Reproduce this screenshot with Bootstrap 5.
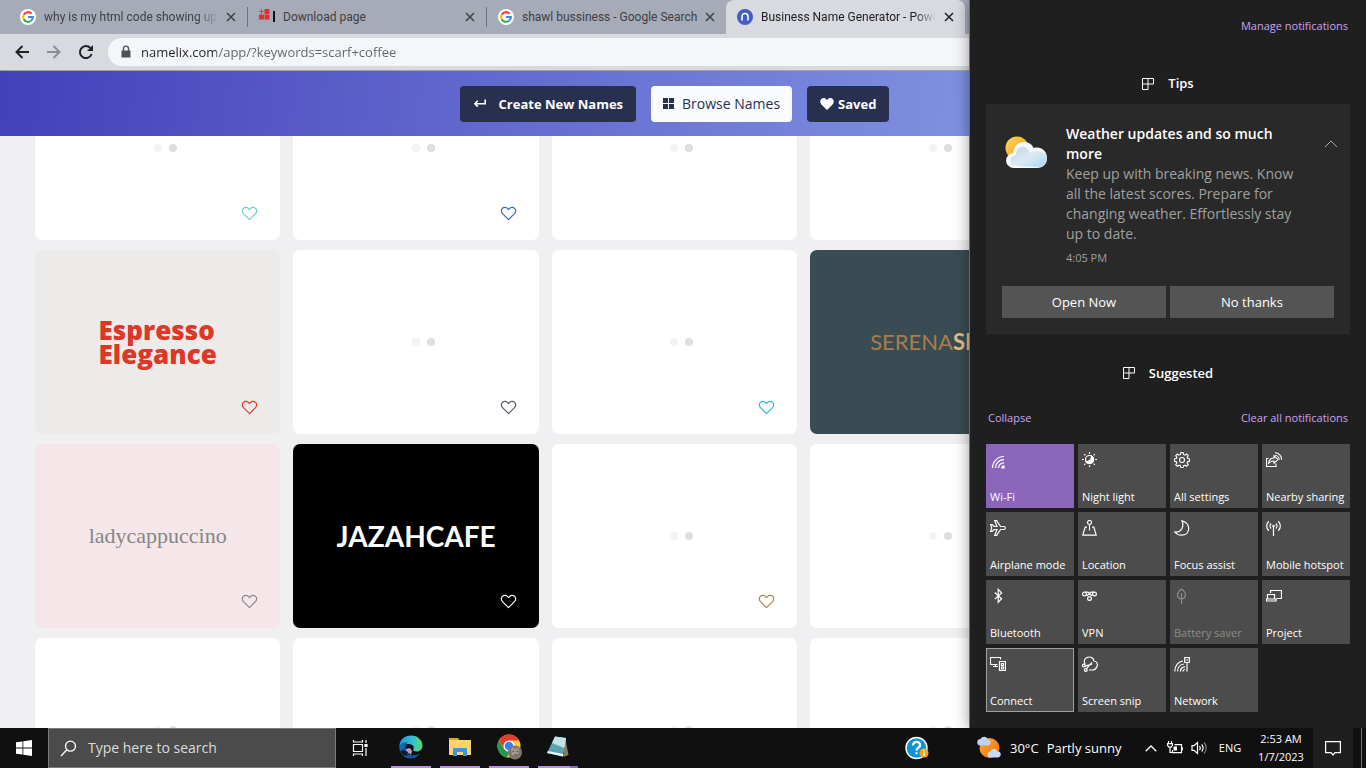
<!DOCTYPE html>
<html lang="en">
<head>
<meta charset="utf-8">
<meta name="viewport" content="width=device-width, initial-scale=1">
<title>Business Name Generator</title>
<link href="https://cdn.jsdelivr.net/npm/bootstrap@5.3.0/dist/css/bootstrap.min.css" rel="stylesheet">
<style>
  body { font-family: "Open Sans", "Noto Sans", sans-serif; font-size: 13px; line-height: 20px; background: #101010; }
  svg { display: block; flex: none; }
  button { border: 0; padding: 0; background: none; color: inherit; }
  .stroke-icon { fill: none; stroke: currentColor; }

  /* browser tabs and toolbar */
  .tab-strip { height: 34px; background: #a7abb7; padding-left: 9px; }
  .browser-tab { width: 239px; padding: 0 11px; color: #3c4043; font-size: 12px; }
  .browser-tab .tab-title { overflow: hidden; white-space: nowrap; font-family: Roboto, "Open Sans", sans-serif; -webkit-mask-image: linear-gradient(90deg, #000 88%, transparent); }
  .tab-title.plain-end { -webkit-mask-image: none !important; }
  .tab-rule { border-right: 1px solid #6f737d; height: 20px; }
  .browser-tab.current { background: #d9dae0; border-radius: 8px 8px 0 0; color: #202124; height: 34px; }
  .tool-strip { height: 36px; background: #d9dae0; padding-left: 6px; color: #202124; }
  .tool-strip > button { width: 32px; display: flex; justify-content: center; }
  .address-pill { height: 28px; border-radius: 14px; background: #f5f6f9; padding-left: 11px; margin-left: 6px; }
  .address-pill input { border: 0; outline: 0; padding: 0; font-size: 13px; color: transparent;
    background: linear-gradient(90deg, #202124 75px, #5f6368 75px); -webkit-background-clip: text; background-clip: text; }

  /* name generator page */
  .site-bar { height: 66px; border-top: 1px solid #9fa0a8; padding-right: 17px; gap: 15px;
    background: linear-gradient(98deg, #4340bb 0, #5f65cc 32%, #6e79d5 50%, #7f92e1 72%, #8fa6ec 100%); }
  .site-btn { height: 36px; border-radius: 4px; padding: 0 13px; font-weight: 700; color: #fff; background: #28304f; }
  .site-btn.light-btn { background: #fafbfe; color: #28304f; font-weight: 500; font-size: 14px; padding: 0 12px; }
  .results { background: #f0f0f3; padding-right: 17px; }
  .name-grid { display: grid; grid-template-columns: repeat(5, 1fr); grid-auto-rows: 184px; gap: 10px 13px; padding: 0 35px; margin-top: -80px; }
  .name-card { position: relative; display: flex; align-items: center; justify-content: center; background: #fff; border-radius: 7px; overflow: hidden; }
  .name-card .like { position: absolute; right: 22px; bottom: 19px; }
  .dots { display: flex; gap: 7px; }
  .dots i { width: 8px; height: 8px; border-radius: 50%; }
  .dots i:nth-child(2) { background: #f3f3f3; }
  .dots i:nth-child(3) { background: #dedede; }
  .logo-espresso { font: 800 26px/24px "Open Sans", sans-serif; color: #dd3727; }
  .logo-lady { font: 22px/28px "Liberation Serif", serif; color: #868686; }
  .logo-jazah { font: 700 28px/32px Lato, sans-serif; color: #fff; }
  .logo-serena { font: 22px/28px Lato, sans-serif; color: #a97c4b; padding-left: 60px; }
  .logo-serena b { color: #e5bd87; font-weight: 700; }

  /* action centre */
  .action-center { position: absolute; top: 0; right: 0; bottom: 0; width: 397px; background: #1f1f1f; color: #fff; border-left: 1px solid #6b6b6b; padding: 15px 16px 16px; box-shadow: 0 0 14px rgba(0,0,0,.4); }
  .action-center a { color: #c9a3f4; text-decoration: none; font-size: 11px; }
  .link-row { padding: 0 2px; }
  .group-title { font-size: 13px; font-weight: 600; gap: 14px; }
  .toast-box { background: #292929; padding: 16px 12px 16px 16px; }
  .toast-text { width: 236px; font-size: 14px; color: #a0a0a0; }
  .toast-text strong { font-weight: 600; color: #fff; display: block; }
  .toast-text time { font-size: 11px; display: block; margin-top: 4px; }
  .toast-actions { margin-top: 18px; }
  .toast-btn { background: #545454; height: 32px; }
  .quick-grid { display: grid; grid-template-columns: repeat(4, 1fr); grid-auto-rows: 64px; gap: 4px; }
  .quick-tile { background: #4c4c4c; color: #fff; font-size: 11px; line-height: 16px; padding: 8px 4px 3px; text-align: left; white-space: nowrap;
    display: flex; flex-direction: column; justify-content: space-between; }
  .quick-tile.on { background: #8a65ba; }
  .quick-tile.focused { box-shadow: inset 0 0 0 1px #a0a0a0; }
  .quick-tile:disabled { color: #8c8c8c; }

  /* taskbar */
  .taskbar { height: 40px; background: #101010; color: #fff; }
  .search-box { width: 288px; background: #4b4b4b; border: 1px solid #7c7c7c; padding-left: 11px; gap: 11px; }
  .search-box input { border: 0; outline: 0; padding: 0; background: none; font-size: 14px; width: 220px; }
  .search-box input::placeholder { color: #dcdcdc; opacity: 1; }
  .task-btn { width: 48px; display: flex; align-items: center; justify-content: center; }
  .app-row { padding-left: 7px; gap: 9px; }
  .app-btn { width: 40px; border-bottom: 2px solid #b98ff0; display: flex; align-items: center; justify-content: center; }
  .app-btn.stacked { border-image: linear-gradient(90deg, #b98ff0 78%, #8a6bb5 78%) 2; }
  .tray-btn { width: 24px; display: flex; align-items: center; justify-content: center; }
  .weather-btn { width: 170px; padding-left: 8px; }
  .lang-btn { width: 38px; font-size: 11px; }
  .clock { width: 64px; font-size: 11px; line-height: 18px; }
  .notify-btn { width: 40px; background: #1f1f1f; display: flex; align-items: center; justify-content: center; }
  .peek { width: 13px; }
  .peek span { border-left: 1px solid #6e6e6e; margin-left: 8px; }
</style>
</head>
<body class="vh-100 overflow-hidden d-flex flex-column">

<svg class="d-none" aria-hidden="true">
  <symbol id="g-logo" viewBox="0 0 16 16">
    <circle cx="8" cy="8" r="8" fill="#fff"/>
    <g fill="none" stroke-width="2.1">
      <path d="M11.6 4.7A4.9 4.9 0 0 0 3.7 5.8" stroke="#ea4335"/>
      <path d="M3.7 5.7a4.9 4.9 0 0 0 0 4.6" stroke="#fbbc05"/>
      <path d="M3.7 10.2a4.9 4.9 0 0 0 7.4 1.5" stroke="#34a853"/>
      <path d="M8 8h4.9a4.8 4.8 0 0 1-1.7 3.6" stroke="#4285f4"/>
    </g>
  </symbol>
  <symbol id="cross" viewBox="0 0 10 10"><path d="M1 1l8 8M9 1L1 9" fill="none" stroke="currentColor" stroke-width="1.5"/></symbol>
  <symbol id="heart" viewBox="0 0 17 15"><path d="M8.500 13.600L2.500 7.600C.9 5.900 1 3.700 2.400 2.400 4 .9 6.400 1.200 7.600 2.700L8.500 3.700 9.400 2.700C10.600 1.200 13 .9 14.600 2.400 16 3.700 16.100 5.900 14.500 7.600Z" fill="none" stroke="currentColor" stroke-width="1.200" stroke-linejoin="round"/></symbol>
  <symbol id="tiles" viewBox="0 0 12 12"><path d="M.5.5h11v5.500h-5.500v5.500h-5.500zM6 .5V6M.5 6H6" fill="none" stroke="currentColor"/></symbol>
</svg>

<div class="position-relative flex-grow-1 overflow-hidden">
  <div class="h-100 d-flex flex-column">

    <nav class="tab-strip d-flex align-items-center flex-shrink-0" aria-label="Tabs">
      <div class="browser-tab tab-rule d-flex align-items-center gap-2">
        <svg width="16" height="16"><use href="#g-logo"/></svg>
        <span class="tab-title flex-grow-1">why is my html code showing up</span>
        <button aria-label="Close tab"><svg width="10" height="10"><use href="#cross"/></svg></button>
      </div>
      <div class="browser-tab tab-rule d-flex align-items-center gap-2">
        <svg width="16" height="16" viewBox="0 0 16 16"><path d="M5.500 0H10.500v5H5.500zM0 5.500h5v5H0zM5.500 5.500h5v5h-5z" fill="#d93236"/><path d="M2.500 0v5M0 2.500h5" stroke="#c54a50"/><path d="M15 2v11" stroke="#111" stroke-width="2"/></svg>
        <span class="tab-title plain-end flex-grow-1">Download page</span>
        <button aria-label="Close tab"><svg width="10" height="10"><use href="#cross"/></svg></button>
      </div>
      <div class="browser-tab d-flex align-items-center gap-2">
        <svg width="16" height="16"><use href="#g-logo"/></svg>
        <span class="tab-title plain-end flex-grow-1">shawl bussiness - Google Search</span>
        <button aria-label="Close tab"><svg width="10" height="10"><use href="#cross"/></svg></button>
      </div>
      <div class="browser-tab current d-flex align-items-center gap-2">
        <svg width="16" height="16" viewBox="0 0 16 16"><circle cx="8" cy="8" r="8" fill="#4460bf"/><path d="M5 11.500V7.500a3 3 0 0 1 6 0v4" fill="none" stroke="#fff" stroke-width="1.500"/></svg>
        <span class="tab-title flex-grow-1">Business Name Generator - Powe</span>
        <button aria-label="Close tab"><svg width="10" height="10"><use href="#cross"/></svg></button>
      </div>
    </nav>

    <div class="tool-strip d-flex align-items-center flex-shrink-0">
      <button aria-label="Back"><svg class="stroke-icon" width="16" height="16" viewBox="0 0 16 16" stroke-width="2"><path d="M15 8H2.500M8.500 2L2.500 8l6 6"/></svg></button>
      <button aria-label="Forward" class="text-secondary"><svg class="stroke-icon" width="16" height="16" viewBox="0 0 16 16" stroke-width="2" opacity=".75"><path d="M1 8h12.500M7.500 2l6 6-6 6"/></svg></button>
      <button aria-label="Reload"><svg width="16" height="16" viewBox="0 0 16 16"><path d="M13.600 10A6 6 0 1 1 12.500 4.200" fill="none" stroke="currentColor" stroke-width="2"/><path d="M15 1v6H9z" fill="currentColor"/></svg></button>
      <div class="address-pill flex-grow-1 d-flex align-items-center gap-2">
        <svg width="14" height="14" viewBox="0 0 14 14"><path d="M2.500 5.500h9v7h-9z" fill="#4f5358"/><path d="M4.500 6V3.600a2.500 2.500 0 0 1 5 0V6" fill="none" stroke="#4f5358" stroke-width="1.400"/></svg>
        <input class="flex-grow-1" type="text" aria-label="Address" value="namelix.com/app/?keywords=scarf+coffee">
      </div>
    </div>

    <header class="site-bar d-flex align-items-center justify-content-center flex-shrink-0 position-relative z-1">
      <button class="site-btn d-flex align-items-center gap-2"><svg class="stroke-icon me-1" width="14" height="12" viewBox="0 0 14 12" stroke-width="1.600"><path d="M12.200 1.500v4.200H2M4.800 2.800L1.900 5.700l2.900 2.900"/></svg>Create New Names</button>
      <button class="site-btn light-btn d-flex align-items-center gap-2"><svg width="11" height="11" viewBox="0 0 11 11" fill="currentColor"><path d="M0 0h5v5H0zM6 0h5v5H6zM0 6h5v5H0zM6 6h5v5H6z"/></svg>Browse Names</button>
      <button class="site-btn d-flex align-items-center gap-1"><svg width="14" height="12" viewBox="0 0 14 12"><path d="M7 12L1.400 6.400C-.2 4.700-.1 2.300 1.300 1 2.900-.5 5.300-.2 6.500 1.500l.5.700.5-.7C8.700-.2 11.100-.5 12.700 1c1.400 1.300 1.500 3.700-.1 5.400z" fill="currentColor"/></svg>Saved</button>
    </header>

    <main class="results flex-grow-1 overflow-hidden">
      <div class="name-grid">
        <article class="name-card"><div class="dots"><i></i><i></i><i></i></div><button class="like" aria-label="Save" style="color:#6dcabf"><svg width="17" height="15"><use href="#heart"/></svg></button></article>
        <article class="name-card"><div class="dots"><i></i><i></i><i></i></div><button class="like" aria-label="Save" style="color:#3462dc"><svg width="17" height="15"><use href="#heart"/></svg></button></article>
        <article class="name-card"><div class="dots"><i></i><i></i><i></i></div></article>
        <article class="name-card"><div class="dots"><i></i><i></i><i></i></div></article>
        <article class="name-card"></article>

        <article class="name-card" style="background:#ecebe9"><div class="logo-espresso">Espresso<br>Elegance</div><button class="like" aria-label="Save" style="color:#dd3727"><svg width="17" height="15"><use href="#heart"/></svg></button></article>
        <article class="name-card"><div class="dots"><i></i><i></i><i></i></div><button class="like" aria-label="Save" style="color:#55566a"><svg width="17" height="15"><use href="#heart"/></svg></button></article>
        <article class="name-card"><div class="dots"><i></i><i></i><i></i></div><button class="like" aria-label="Save" style="color:#27b5ee"><svg width="17" height="15"><use href="#heart"/></svg></button></article>
        <article class="name-card justify-content-start" style="background:#3a4c53"><div class="logo-serena">SERENA<b>SI</b></div></article>
        <article class="name-card"></article>

        <article class="name-card" style="background:#f5e6e9"><div class="logo-lady">ladycappuccino</div><button class="like" aria-label="Save" style="color:#868686"><svg width="17" height="15"><use href="#heart"/></svg></button></article>
        <article class="name-card" style="background:#000"><div class="logo-jazah">JAZAHCAFE</div><button class="like" aria-label="Save" style="color:#fff"><svg width="17" height="15"><use href="#heart"/></svg></button></article>
        <article class="name-card"><div class="dots"><i></i><i></i><i></i></div><button class="like" aria-label="Save" style="color:#b97a42"><svg width="17" height="15"><use href="#heart"/></svg></button></article>
        <article class="name-card"><div class="dots"><i></i><i></i><i></i></div></article>
        <article class="name-card"></article>

        <article class="name-card"><div class="dots"><i></i><i></i><i></i></div></article>
        <article class="name-card"><div class="dots"><i></i><i></i><i></i></div></article>
        <article class="name-card"><div class="dots"><i></i><i></i><i></i></div></article>
        <article class="name-card"><div class="dots"><i></i><i></i><i></i></div></article>
        <article class="name-card"></article>
      </div>
    </main>
  </div>

  <aside class="action-center z-2 d-flex flex-column" aria-label="Action center">
    <div class="link-row text-end"><a href="#">Manage notifications</a></div>
    <h2 class="group-title d-flex align-items-center justify-content-center mb-0 mt-4 pt-3 pb-2"><svg width="12" height="12"><use href="#tiles"/></svg>Tips</h2>
    <section class="toast-box mt-1">
      <div class="d-flex pt-1">
        <svg class="mt-2 me-3" width="48" height="44" viewBox="0 0 48 44">
          <defs>
            <linearGradient id="sunny" x1="0" y1="0" x2="1" y2="1"><stop offset="0" stop-color="#ffd75a"/><stop offset="1" stop-color="#f39a16"/></linearGradient>
            <linearGradient id="cloudy" x1="0" y1="0" x2="1" y2="1"><stop offset="0" stop-color="#b9d9ea"/><stop offset=".5" stop-color="#dde9f1"/><stop offset="1" stop-color="#a3d8f5"/></linearGradient>
          </defs>
          <circle cx="15" cy="16" r="11.500" fill="url(#sunny)"/>
          <path d="M12 36a7.500 7.500 0 0 1-.8-15 C12 14 16 10 22 10c5 0 8 2.500 9.600 6C39 14 45 19 45 26c0 6-4 10-10 10z" fill="#f6f9fb"/>
          <path d="M14 34c-7 0-8-9 0-11 0-6 4-9 9-8 2 1 4 3 5 6 9-5 17 0 17 6 0 5-4 8-10 8z" fill="url(#cloudy)"/>
        </svg>
        <div class="toast-text"><strong>Weather updates and so much more</strong>Keep up with breaking news. Know all the latest scores. Prepare for changing weather. Effortlessly stay up to date.<time>4:05 PM</time></div>
        <button class="align-self-start mt-3 ms-auto" aria-label="Collapse tip"><svg class="stroke-icon" width="14" height="8" viewBox="0 0 14 8" opacity=".6"><path d="M1 7l6-6 6 6"/></svg></button>
      </div>
      <div class="toast-actions d-flex gap-1 pe-1"><button class="toast-btn flex-fill w-50">Open Now</button><button class="toast-btn flex-fill w-50">No thanks</button></div>
    </section>
    <h2 class="group-title d-flex align-items-center justify-content-center mb-0 mt-4 pt-2"><svg width="12" height="12"><use href="#tiles"/></svg>Suggested</h2>
    <div class="mt-auto">
      <div class="link-row d-flex justify-content-between mb-3"><a href="#">Collapse</a><a href="#">Clear all notifications</a></div>
      <div class="quick-grid">
        <button class="quick-tile on"><svg class="stroke-icon" width="18" height="18" viewBox="0 0 18 18" stroke-width="1.200"><path d="M2.500 16C2.500 9.500 7.500 4.500 14 4.500M5.500 16C5.500 11 9 7.700 14 7.700M8.500 16c0-3 2.500-5.200 5.500-5.200"/><path d="M12 16v-1.200l1-.8H14V16z" fill="currentColor"/></svg>Wi-Fi</button>
        <button class="quick-tile"><svg class="stroke-icon" width="16" height="16" viewBox="0 0 16 16" stroke-width="1.200"><circle cx="7.500" cy="7.500" r="4"/><path d="M9.500 4a4 4 0 1 1-5.400 5.400C7 10 10 7.500 9.500 4z" fill="currentColor"/><path d="M7.500 0v1.800M7.500 13.200V15M0 7.500h1.800M13.200 7.500H15M2.200 2.200l1.200 1.200M11.600 11.600l1.200 1.200M2.200 12.800l1.200-1.200M11.600 3.400l1.200-1.200"/></svg>Night light</button>
        <button class="quick-tile"><svg class="stroke-icon" width="16" height="16" viewBox="0 0 16 16" stroke-width="1.100"><path d="M6.800.6h2.400l.3 1.900 1.500.7L12.700 2l1.600 1.700-1.100 1.600.5 1.300 1.900.3v2.300l-1.900.4-.6 1.400 1.200 1.700-1.700 1.600-1.600-1.100-1.500.6-.3 1.700H6.800l-.3-1.700-1.500-.6-1.700 1.100-1.600-1.600 1.100-1.700-.6-1.400L.4 9.200V6.900l1.900-.3.6-1.300-1.200-1.600L3.300 2 5 3.200l1.500-.7z"/><circle cx="8" cy="8" r="2.500"/></svg>All settings</button>
        <button class="quick-tile"><svg class="stroke-icon" width="16" height="16" viewBox="0 0 16 16" stroke-width="1.100"><path d="M2.500 6.500h-2v8h9.500v-3"/><path d="M2.500 11.500C3 7.500 5 6 8 6V3.800l4 3.800-4 3.600V9C5.500 9 4 9.800 2.500 11.500z"/><path d="M9 3.200a4.500 4.500 0 0 1 4.200 4.500M9 .7a6.500 6.500 0 0 1 6.500 7"/></svg>Nearby sharing</button>
        <button class="quick-tile"><svg class="stroke-icon" width="16" height="16" viewBox="0 0 16 16" stroke-width="1.200"><path d="M.7 4.700h1.500L4 6.500h3L4.700.7h2L10.500 6.500H14c1.800 0 1.800 3 0 3h-3.500L6.700 15.300h-2L7 9.500H4L2.200 11.300H.7L1.700 8z"/></svg>Airplane mode</button>
        <button class="quick-tile"><svg class="stroke-icon" width="16" height="16" viewBox="0 0 16 16" stroke-width="1.200"><circle cx="7.500" cy="2.500" r="2"/><path d="M7.500 4.500v6M5 7.200H3.200L.8 15.200h13.400L11.800 7.200H10"/></svg>Location</button>
        <button class="quick-tile"><svg class="stroke-icon" width="16" height="16" viewBox="0 0 16 16" stroke-width="1.200"><path d="M8 .8c9 2 9 14.400-.5 14.400-3 0-5-1-6.700-3.200C7 12.800 10.500 7 8 .8z"/></svg>Focus assist</button>
        <button class="quick-tile"><svg class="stroke-icon" width="16" height="16" viewBox="0 0 16 16" stroke-width="1.200"><path d="M7.500 5v11M5.200 3.500a3.300 3.300 0 0 0 0 5M9.800 3.500a3.300 3.300 0 0 1 0 5M2.800 1.200a6.500 6.500 0 0 0 0 9.600M12.200 1.200a6.500 6.500 0 0 1 0 9.600"/><circle cx="7.500" cy="6" r=".6"/></svg>Mobile hotspot</button>
        <button class="quick-tile"><svg class="stroke-icon" width="16" height="16" viewBox="0 0 16 16" stroke-width="1.200"><path d="M4.800 4.500l6.800 6.200L8.200 14.300V1.300l3.400 3.600-6.800 6.200"/></svg>Bluetooth</button>
        <button class="quick-tile"><svg class="stroke-icon" width="16" height="16" viewBox="0 0 16 16" stroke-width="1.200"><circle cx="2.500" cy="6" r="1.900"/><circle cx="12.500" cy="6" r="1.900"/><circle cx="7.500" cy="10.500" r="1.900"/><path d="M3 4.200h3l4 3.600M12 4.200H9L5 7.800"/></svg>VPN</button>
        <button class="quick-tile" disabled><svg class="stroke-icon" width="16" height="16" viewBox="0 0 16 16" stroke-width="1.200"><path d="M7.500 1C4.800 3 3.500 5 3.500 7s1.800 4 4 4 4-2 4-4-1.300-4-4-6zM7.500 5v11"/></svg>Battery saver</button>
        <button class="quick-tile"><svg class="stroke-icon" width="16" height="16" viewBox="0 0 16 16" stroke-width="1.200"><path d="M4.500 5V2.500h11v8h-5M1.500 10.500v-4h7v4M.5 11h9.500v2H.5z"/></svg>Project</button>
        <button class="quick-tile focused"><svg class="stroke-icon" width="16" height="16" viewBox="0 0 16 16" stroke-width="1.200"><path d="M7.500 8.500h-7v-7h10v2M5.500 8.500v2M3 10.500h5M9.500 5.500h6v9h-6z"/><path d="M11.500 7.500h2v2h-2zM11.500 11h2v2h-2z"/></svg>Connect</button>
        <button class="quick-tile"><svg class="stroke-icon" width="16" height="16" viewBox="0 0 16 16" stroke-width="1.200"><path d="M3 8C1 4 4 1 7 1s5 2 4.800 4C15 5.500 16 8 15 10.500S12 14 10 14H7"/><circle cx="1.800" cy="9.500" r="1.400"/><circle cx="3.800" cy="14" r="1.400"/><path d="M3 10.200l7-2M4.400 12.700L10 6.500"/></svg>Screen snip</button>
        <button class="quick-tile"><svg class="stroke-icon" width="16" height="16" viewBox="0 0 16 16" stroke-width="1.200"><path d="M.8 15.500C.8 9.500 4.500 5.500 9 5M3.600 15.500c0-4.500 3-7.200 6.400-7.500M6.400 15.500c0-2.800 1.800-4.500 4.600-4.700M9 15.500c0-1.500 1-2 2-2M13 6.500v9M10.700 1.500h4.600v5h-4.600z"/><path d="M12 4h2"/></svg>Network</button>
      </div>
    </div>
  </aside>
</div>

<footer class="taskbar d-flex flex-shrink-0">
  <button class="task-btn" aria-label="Start"><svg width="16" height="16" viewBox="0 0 16 16" fill="#fff"><path d="M0 2.300L6.500 1.400v6.200H0zM7.300 1.300L16 0v7.600H7.300zM0 8.400h6.500v6.200L0 13.700zM7.300 8.400H16V16l-8.700-1.300z"/></svg></button>
  <label class="search-box d-flex align-items-center">
    <svg class="stroke-icon" width="17" height="17" viewBox="0 0 17 17" stroke-width="1.300"><circle cx="10.500" cy="6.200" r="5"/><path d="M6.900 9.800L1 16"/></svg>
    <input type="text" placeholder="Type here to search" aria-label="Search">
  </label>
  <button class="task-btn" aria-label="Task view"><svg class="stroke-icon" width="16" height="16" viewBox="0 0 16 16" stroke-width="1.200"><path d="M1.500 4.500h9v7h-9zM1.500 0v2h9V0M1.500 16v-2h9v2M14 0v3M14 8v8"/><path d="M13 4.500h2v2h-2z" fill="currentColor"/></svg></button>
  <div class="app-row d-flex">
    <button class="app-btn" aria-label="Edge"><svg width="24" height="24" viewBox="0 0 24 24">
      <defs><linearGradient id="edge-a" x1="0" x2="1"><stop offset="0" stop-color="#1b9de2"/><stop offset=".6" stop-color="#35c1d0"/><stop offset="1" stop-color="#5fdc58"/></linearGradient></defs>
      <path d="M.3 11C1 4 6 .5 12 .5c7 0 11.500 5 11.500 10 0 3.500-2.500 6-6 6-3 0-4-1-3-2.500 1-2.500-1-5-5-5C5 9 .5 11 .3 11z" fill="url(#edge-a)"/>
      <path d="M.3 11.500C1.500 8 5.500 6.500 9 7.500c-3 1.500-4 5-2.500 8.500 2 4.500 8 6 14 2.500C17 24 10 24.500 6 22 2 19.500 0 16 .3 11.500z" fill="#1268b5"/>
      <path d="M9 8.500c-3 3-3 8 1 11 3 2 7 1.500 10.500-1C17.500 23.500 12 24.500 8 21 4 17.500 4.500 10 9 8.500z" fill="#1a4f95"/>
      <path d="M7 14l4-1 2 3-1 4-2-2-3 1z" fill="#b69fc4"/><path d="M1 16l4-1 4 2-1 4-4-1z" fill="#0e1a2e"/></svg></button>
    <button class="app-btn" aria-label="File Explorer"><svg width="22" height="22" viewBox="0 0 22 22"><path d="M0 2h9l2 3H0z" fill="#e7a51b"/><path d="M0 4h22v15H0z" fill="#ffd665"/><path d="M4 20v-8h14v8h-4v-4H8v4z" fill="#3a96dd"/></svg></button>
    <button class="app-btn" aria-label="Chrome"><svg width="25" height="26" viewBox="0 0 25 26">
      <circle cx="12" cy="12" r="11.500" fill="#ffcd40"/><path d="M2 6.200A11.500 11.500 0 0 1 22 6.500H12L7.500 14.600z" fill="#e33b2e"/><path d="M2 6.200l5.500 9L12.500 18 10 23.400A11.500 11.500 0 0 1 2 6.200z" fill="#219a4b"/><circle cx="12" cy="12" r="5.500" fill="#fff"/><circle cx="12" cy="12" r="4.300" fill="#3b7ded"/><circle cx="18" cy="18.500" r="7" fill="#83756e"/><path d="M14 15l2-2 2 2 3-2 1 5-3 4-4-1z" fill="#a3968d"/><path d="M15.500 17.500h1.500M19.500 17.500H21M17 21h3" stroke="#5a4e48"/></svg></button>
    <button class="app-btn stacked" aria-label="Notepad"><svg width="24" height="24" viewBox="0 0 24 24"><path d="M19 2l3.500 18-5 2z" fill="#8d7a5a"/><path d="M9 1.500L20 3l-3 18.500L1 18z" fill="#5ba5b3"/><path d="M9 1.500L20 3l-1.500 10L6 8z" fill="#c3e3e7"/><path d="M1 18l16 3.500.4-2.500L1.900 16z" fill="#e9f4f5"/></svg></button>
  </div>
  <div class="ms-auto d-flex">
    <button class="task-btn me-1" aria-label="Get help"><svg width="24" height="24" viewBox="0 0 24 24"><circle cx="11.500" cy="12" r="10.500" fill="#0d94d8" stroke="#fff" stroke-width="1.400"/><path d="M8 9.500c0-5 7.500-4.500 7 0-.3 2.500-3.500 2.200-3.500 5M11.500 16.300v2" fill="none" stroke="#fff" stroke-width="2.300"/><circle cx="19" cy="17" r="4.500" fill="#f5a81c"/><path d="M19 14v1.200M19 16.200V20" stroke="#fff" stroke-width="1.300"/></svg></button>
    <button class="weather-btn d-flex align-items-center ms-4 gap-2"><svg width="25" height="24" viewBox="0 0 25 24">
      <defs><linearGradient id="orb" x1="0" y1="0" x2="1" y2="1"><stop offset="0" stop-color="#ffb02e"/><stop offset="1" stop-color="#ec6a0d"/></linearGradient></defs>
      <circle cx="12.500" cy="12" r="10" fill="url(#orb)"/><path d="M3.500 9.500a3.200 3.200 0 0 1 0-6.400C5 0 9.500 0 10.500 3.200c4.500.5 4 6.300 0 6.300z" fill="#bcd2f7"/><path d="M13.500 21.500a3 3 0 0 1 0-6c1.300-4 6-3.500 6.800-.2 4.700.2 4.500 6.200.4 6.200z" fill="#c6dafa"/></svg><span>30°C</span><span>Partly sunny</span></button>
    <button class="tray-btn" aria-label="Hidden icons"><svg class="stroke-icon" width="12" height="7" viewBox="0 0 12 7" stroke-width="1.300"><path d="M.7 6.200L6 1l5.300 5.200"/></svg></button>
    <button class="tray-btn" aria-label="Battery"><svg class="stroke-icon" width="16" height="14" viewBox="0 0 16 14" stroke-width="1.200"><path d="M7.500 3.600h7v8h-9V9M15.300 6v3.200M1.500 0v2.500M4.500 0v2.500M.6 2.600h4.800v2L4 6.200H2L.6 4.600zM3 6v5.500h2.500"/><path d="M6.500 5.500h3.500v4H6.500z" fill="currentColor" stroke="none"/></svg></button>
    <button class="tray-btn" aria-label="Volume"><svg class="stroke-icon" width="17" height="14" viewBox="0 0 17 14" stroke-width="1.200"><path d="M1 4.700h2L6.500 1.500v11L3 9.300H1zM8.500 5a3.200 3.200 0 0 1 0 4M10.700 3.500a5.500 5.500 0 0 1 0 7"/><path d="M13 1.500a8 8 0 0 1 0 11" opacity=".45"/></svg></button>
    <button class="lang-btn">ENG</button>
    <button class="clock text-center">2:53 AM<br>1/7/2023</button>
    <button class="notify-btn" aria-label="Notifications"><svg class="stroke-icon" width="16" height="16" viewBox="0 0 16 16" stroke-width="1.200"><path d="M.6 1.600h14.800v11H10L8 15l-2-2.400H.6z"/></svg></button>
    <div class="peek d-flex"><span></span></div>
  </div>
</footer>

<script src="https://cdn.jsdelivr.net/npm/bootstrap@5.3.0/dist/js/bootstrap.bundle.min.js"></script>
</body>
</html>
